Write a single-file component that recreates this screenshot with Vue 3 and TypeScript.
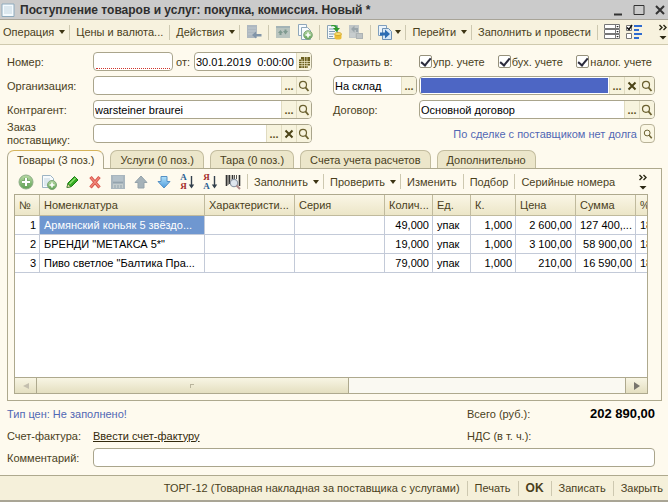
<script setup lang="ts">
import { ref } from 'vue'

interface Row {
  no: number
  name: string
  qty: string
  unit: string
  k: string
  price: string
  sum: string
  vat: string
}

const rows: Row[] = [
  { no: 1, name: 'Армянский коньяк 5 звёздо...', qty: '49,000', unit: 'упак', k: '1,000', price: '2 600,00', sum: '127 400,...', vat: '18%' },
  { no: 2, name: 'БРЕНДИ "МЕТАКСА 5*"', qty: '19,000', unit: 'упак', k: '1,000', price: '3 100,00', sum: '58 900,00', vat: '18%' },
  { no: 3, name: 'Пиво светлое "Балтика Пра...', qty: '79,000', unit: 'упак', k: '1,000', price: '210,00', sum: '16 590,00', vat: '18%' },
]

const tabs = ['Товары (3 поз.)', 'Услуги (0 поз.)', 'Тара (0 поз.)', 'Счета учета расчетов', 'Дополнительно']
const activeTab = ref(0)
const selectedRow = ref(0)

const flags = ref([
  { label: 'упр. учете', on: true },
  { label: 'бух. учете', on: true },
  { label: 'налог. учете', on: true },
])

const rowTools = [
  { id: 'add', label: 'Добавить' },
  { id: 'copy', label: 'Скопировать' },
  { id: 'edit', label: 'Изменить строку' },
  { id: 'delete', label: 'Удалить' },
  { id: 'save', label: 'Сохранить' },
  { id: 'up', label: 'Вверх' },
  { id: 'down', label: 'Вниз' },
  { id: 'sort-asc', label: 'По возрастанию' },
  { id: 'sort-desc', label: 'По убыванию' },
  { id: 'barcode', label: 'Штрихкод' },
]

const number = ref('')
const date = ref('30.01.2019  0:00:00')
const org = ref('')
const partner = ref('warsteiner braurei')
const order = ref('')
const target = ref('На склад')
const store = ref('')
const contract = ref('Основной договор')
const comment = ref('')
</script>

<template>
  <svg class="sprite" aria-hidden="true">
    <defs>
      <linearGradient id="g-green" x1="0" y1="0" x2="0" y2="1">
        <stop offset="0" stop-color="#b9dba6" /><stop offset="1" stop-color="#5da052" />
      </linearGradient>
      <linearGradient id="g-blue" x1="0" y1="0" x2="0" y2="1">
        <stop offset="0" stop-color="#b4e2fa" /><stop offset="1" stop-color="#4c9bdc" />
      </linearGradient>
    </defs>
    <symbol id="i-doc" viewBox="0 0 16 16">
      <path d="M2 2h12v12.500H2z" fill="#f4fafd" stroke="#8eaabd" />
      <path d="M4 5h8M4 7h8M4 9h8M4 11h8" stroke="#c3d5e0" />
    </symbol>
    <symbol id="i-add" viewBox="0 0 16 16">
      <circle cx="8" cy="8" r="7" fill="url(#g-green)" stroke="#8fae88" />
      <path d="M8 4v8M4 8h8" stroke="#78a86c" stroke-width="4" />
      <path d="M8 4v8M4 8h8" stroke="#fff" stroke-width="2" />
    </symbol>
    <symbol id="i-copy" viewBox="0 0 16 16">
      <path d="M1.500 1.500h8l3 3v9h-11z" fill="#f7fbfd" stroke="#9db4c4" />
      <path d="M3 5h6M3 7h7M3 9h5M3 11h4" stroke="#c3d5e0" />
      <circle cx="11" cy="11" r="4.500" fill="url(#g-green)" stroke="#7da577" />
      <path d="M11 8.500v5M8.500 11h5" stroke="#fff" stroke-width="1.600" />
    </symbol>
    <symbol id="i-copies" viewBox="0 0 16 16">
      <path d="M1.500 .5h8v11h-8z" fill="#f7fbfd" stroke="#8fa7ba" />
      <path d="M4.500 3.500h6l3 3v9h-9z" fill="#f7fbfd" stroke="#8fa7ba" />
      <circle cx="11" cy="11" r="4.300" fill="url(#g-green)" stroke="#7da577" />
      <path d="M11 8.500v5M8.500 11h5" stroke="#fff" stroke-width="1.600" />
    </symbol>
    <symbol id="i-edit" viewBox="0 0 16 16">
      <path d="M3 13.500l1-4.500 6.500-6.500 3.500 3.500-6.500 6.500z" fill="#35ab22" stroke="#1c7c14" />
      <path d="M5.500 10l6-6" stroke="#8be070" stroke-width="1.500" />
      <path d="M3 13.500l.8-3.500 2.800 2.700z" fill="#f2e6b4" stroke="#386b2a" stroke-width=".6" />
    </symbol>
    <symbol id="i-delete" viewBox="0 0 16 16">
      <path d="M3.500 3l9 10.500M12.500 3l-9 10.500" stroke="#d85348" stroke-width="3.200" />
      <path d="M3.800 3.500l8.500 9.500M12.200 3.500l-8.500 9.500" stroke="#f0887a" stroke-width="1.200" />
    </symbol>
    <symbol id="i-save" viewBox="0 0 16 16">
      <path d="M1 1h14v14H1z" fill="#a9b6be" />
      <path d="M3 2h10v5H3z" fill="#b4c1c9" /><path d="M3 10h10v4H3z" fill="#c3cccd" />
      <path d="M3 8.500h10M5 11v3M8 11v3M11 11v3" stroke="#93a3ad" />
    </symbol>
    <symbol id="i-up" viewBox="0 0 16 16">
      <path d="M8 2l6 6.500h-3V14H5V8.500H2z" fill="#a5b2b9" stroke="#95a3ab" />
    </symbol>
    <symbol id="i-down" viewBox="0 0 16 16">
      <path d="M8 14L2 7.500h3V2.500h6v5h3z" fill="url(#g-blue)" stroke="#5590c4" />
    </symbol>
    <symbol id="i-arrow-down" viewBox="0 0 16 16">
      <path d="M12.500 2v11" stroke="#33404c" stroke-width="1.400" />
      <path d="M9.800 10.500h5.400L12.500 14.500z" fill="#33404c" />
    </symbol>
    <symbol id="i-barcode" viewBox="0 0 16 16">
      <path d="M1.500 1v11M4.500 1v9M7.500 1v5M14.500 1v11" stroke="#333" stroke-width="1.600" />
      <path d="M3 1v10M9.500 1v4M11.500 1v4" stroke="#555" />
      <circle cx="9" cy="9" r="3.700" fill="#dfe6ee" stroke="#909aa8" stroke-width="1.200" />
      <path d="M11.500 11.500l3.500 3.500" stroke="#b08a8a" stroke-width="2" />
    </symbol>
    <symbol id="i-back" viewBox="0 0 16 16">
      <path d="M1 1h10v13H1z" fill="#aeb8c0" /><path d="M2 4h8M2 7h8M2 10h8" stroke="#bfc8ce" />
      <path d="M6 11l4-3.500V10h5.500v2.500H10V14.500z" fill="#8295a8" />
    </symbol>
    <symbol id="i-refresh" viewBox="0 0 16 16">
      <path d="M1 2h14v12H1z" fill="#b9c4bf" /><path d="M1 3h14" stroke="#a3b3b6" stroke-width="2" />
      <path d="M3 9l2.500-3L8 9H6.500v2H4.500V9zM8 7h1.500V5.500h2V7H13l-2.500 3.500z" fill="#7f9a90" />
    </symbol>
    <symbol id="i-post" viewBox="0 0 16 16">
      <path d="M1.500 1.500h10v13h-10z" fill="#f4f9fc" stroke="#8ba4b6" />
      <path d="M3 5h5M3 7.500h6M3 10h5M3 12.500h4" stroke="#7d99b3" />
      <path d="M5 1.500c4-1 6 0 6.500 2.500H14l-3.500 4L7 4h2.300C9 2.500 7.500 2 5 2.500z" fill="#2f9a2c" />
      <path d="M8.500 10v4c0 2 7 2 7 0v-4z" fill="#ebbd36" />
      <ellipse cx="12" cy="10" rx="3.500" ry="1.600" fill="#f7dc6c" stroke="#c99a20" stroke-width=".7" />
    </symbol>
    <symbol id="i-unpost" viewBox="0 0 16 16">
      <path d="M1 1h10v13H1z" fill="#c0c6c7" /><path d="M8 9h7v6H8z" fill="#adb3b4" />
      <path d="M3 5l3.500-3.500V4H10v4H8V6H6.500v2.500z" fill="#9aa5aa" /><path d="M2 10h5M2 12h5M9 11h5M9 13h5" stroke="#cfd4d5" />
    </symbol>
    <symbol id="i-goto" viewBox="0 0 16 16">
      <path d="M1.500 1.500h8v10h-8z" fill="#eaf3fa" stroke="#7f9fbd" />
      <path d="M5.500 4.500h6l3 3v8h-9z" fill="#d6e8f6" stroke="#6d90b3" />
      <path d="M3 8.500h5V5.500l5 4.500-5 4.500v-3H3z" fill="#2c6db3" />
    </symbol>
    <symbol id="i-list" viewBox="0 0 16 16">
      <path d="M.5 .5h15v4H.5zM.5 5.500h15v4H.5zM.5 10.500h15v4H.5z" fill="#fff" stroke="#777" />
      <path d="M11.500 .5v14" stroke="#777" />
      <path d="M12.300 2h2.500l-1.200 1.500zM12.300 7h2.500l-1.200 1.500zM12.300 12h2.500l-1.200 1.500z" fill="#222" />
    </symbol>
    <symbol id="i-checks" viewBox="0 0 16 16">
      <path d="M.5 1.500h5v5h-5zM.5 9.500h5v5h-5z" fill="#fff" stroke="#777" />
      <path d="M1 3.500l2 2L6 1" fill="none" stroke="#111" stroke-width="1.500" />
      <path d="M8 2h8M8 10h8" stroke="#2e6bd0" stroke-width="2" />
      <path d="M8 6h5M8 14h5" stroke="#2e6bd0" stroke-width="2" />
    </symbol>
    <symbol id="i-lens" viewBox="0 0 12 12">
      <circle cx="5" cy="4.800" r="3.500" fill="none" stroke="#6b6130" stroke-width="1.200" />
      <path d="M7.400 7.400L10.500 11" stroke="#6b6130" stroke-width="1.800" />
    </symbol>
    <symbol id="i-cross" viewBox="0 0 12 12">
      <path d="M2.500 2.500l7 7M9.500 2.500l-7 7" stroke="#4c4418" stroke-width="2" />
    </symbol>
    <symbol id="i-cal" viewBox="0 0 12 12">
      <path d="M3 1h9v8.500h-2V12H1V3.500h2z" fill="#6b5f1e" />
      <path d="M1 5.500h11M1 7.500h11M1 9.700h9M4 3v9M6.500 1v11M9 1v11" stroke="#f3eecb" stroke-width=".7" />
    </symbol>
    <symbol id="i-more" viewBox="0 0 10 16">
      <path d="M1.500 1l2.500 2.500L1.500 6M5.500 1L8 3.500 5.500 6" fill="none" stroke="#2b2714" stroke-width="1.400" />
      <path d="M1.500 12h7L5 15.500z" fill="#2b2714" />
    </symbol>
  </svg>

  <main class="window">
    <header class="titlebar">
      <svg class="ic"><use href="#i-doc" /></svg>
      <h1>Поступление товаров и услуг: покупка, комиссия. Новый *</h1>
      <div class="win-buttons">
        <button type="button" aria-label="Свернуть"><svg viewBox="0 0 12 12"><path d="M2 10.500h8" stroke="#333" stroke-width="2" /></svg></button>
        <button type="button" aria-label="Развернуть"><svg viewBox="0 0 12 12"><path d="M1 1.500h10v9H1z" fill="none" stroke="#333" /></svg></button>
        <button type="button" aria-label="Закрыть окно"><svg viewBox="0 0 12 12"><path d="M2 2l8 8M10 2l-8 8" stroke="#333" stroke-width="2" /></svg></button>
      </div>
    </header>

    <nav class="toolbar">
      <button type="button" class="tb">Операция<i class="caret" /></button>
      <i class="sep" />
      <button type="button" class="tb">Цены и валюта...</button>
      <i class="sep" />
      <button type="button" class="tb">Действия<i class="caret" /></button>
      <i class="sep" />
      <button type="button" class="tool" aria-label="К списку"><svg class="ic"><use href="#i-back" /></svg></button>
      <i class="sep" />
      <button type="button" class="tool" aria-label="Перечитать"><svg class="ic"><use href="#i-refresh" /></svg></button>
      <button type="button" class="tool" aria-label="Скопировать документ"><svg class="ic"><use href="#i-copies" /></svg></button>
      <i class="sep" />
      <button type="button" class="tool" aria-label="Провести"><svg class="ic"><use href="#i-post" /></svg></button>
      <button type="button" class="tool" aria-label="Отменить проведение"><svg class="ic"><use href="#i-unpost" /></svg></button>
      <i class="sep" />
      <button type="button" class="tool" aria-label="На основании"><svg class="ic"><use href="#i-goto" /></svg><i class="caret tight" /></button>
      <i class="sep" />
      <button type="button" class="tb">Перейти<i class="caret" /></button>
      <i class="sep" />
      <button type="button" class="tb">Заполнить и провести</button>
      <i class="sep" />
      <button type="button" class="tool" aria-label="Список"><svg class="ic"><use href="#i-list" /></svg></button>
      <button type="button" class="tool" aria-label="Настройка"><svg class="ic"><use href="#i-checks" /></svg></button>
      <button type="button" class="more" aria-label="Ещё"><svg><use href="#i-more" /></svg></button>
    </nav>

    <form class="form" @submit.prevent>
      <div class="col">
        <div class="line">
          <label class="lbl" for="f-num">Номер:</label>
          <div class="field num"><input id="f-num" v-model="number" class="required" /></div>
          <label class="from" for="f-date">от:</label>
          <div class="field"><input id="f-date" v-model="date" class="date" /><button type="button" aria-label="Календарь"><svg><use href="#i-cal" /></svg></button></div>
        </div>
        <div class="line">
          <label class="lbl" for="f-org">Организация:</label>
          <div class="field"><input id="f-org" v-model="org" /><button type="button" class="dots">...</button><button type="button" aria-label="Открыть"><svg><use href="#i-lens" /></svg></button></div>
        </div>
        <div class="line">
          <label class="lbl" for="f-partner">Контрагент:</label>
          <div class="field"><input id="f-partner" v-model="partner" /><button type="button" class="dots">...</button><button type="button" aria-label="Открыть"><svg><use href="#i-lens" /></svg></button></div>
        </div>
        <div class="line">
          <label class="lbl two" for="f-order">Заказ<br>поставщику:</label>
          <div class="field"><input id="f-order" v-model="order" /><button type="button" class="dots">...</button><button type="button" aria-label="Очистить"><svg><use href="#i-cross" /></svg></button><button type="button" aria-label="Открыть"><svg><use href="#i-lens" /></svg></button></div>
        </div>
      </div>

      <div class="col">
        <div class="line">
          <span class="lbl">Отразить в:</span>
          <div class="flags">
            <label v-for="f in flags" :key="f.label"><input v-model="f.on" type="checkbox">{{ f.label }}</label>
          </div>
        </div>
        <div class="line">
          <div class="field target"><input v-model="target" aria-label="Поступление"><button type="button" class="dots">...</button></div>
          <div class="field"><input v-model="store" class="active" aria-label="Склад"><button type="button" class="dots">...</button><button type="button" aria-label="Очистить"><svg><use href="#i-cross" /></svg></button><button type="button" aria-label="Открыть"><svg><use href="#i-lens" /></svg></button></div>
        </div>
        <div class="line">
          <label class="lbl" for="f-contract">Договор:</label>
          <div class="field"><input id="f-contract" v-model="contract"><button type="button" class="dots">...</button><button type="button" aria-label="Открыть"><svg><use href="#i-lens" /></svg></button></div>
        </div>
        <div class="line debt">
          <span class="note">По сделке с поставщиком нет долга</span>
          <button type="button" class="lens-btn" aria-label="Показать долг"><svg><use href="#i-lens" /></svg></button>
        </div>
      </div>
    </form>

    <section class="tabs">
      <div class="tablist" role="tablist">
        <button v-for="(t, i) in tabs" :key="t" type="button" role="tab" :aria-selected="i === activeTab" :class="{ on: i === activeTab }" @click="activeTab = i">{{ t }}</button>
      </div>
      <div class="panel">
        <div class="toolbar inner">
          <button v-for="t in rowTools" :key="t.id" type="button" class="tool" :aria-label="t.label">
            <span v-if="t.id.startsWith('sort')" class="sort" :class="{ desc: t.id === 'sort-desc' }">
              <span class="letters"><b class="a">А</b><b class="z">Я</b></span>
              <svg class="ic"><use href="#i-arrow-down" /></svg>
            </span>
            <svg v-else class="ic"><use :href="'#i-' + t.id" /></svg>
          </button>
          <i class="sep" />
          <button type="button" class="tb">Заполнить<i class="caret" /></button>
          <i class="sep" />
          <button type="button" class="tb">Проверить<i class="caret" /></button>
          <i class="sep" />
          <button type="button" class="tb">Изменить</button>
          <i class="sep" />
          <button type="button" class="tb">Подбор</button>
          <i class="sep" />
          <button type="button" class="tb">Серийные номера</button>
          <button type="button" class="more" aria-label="Ещё"><svg><use href="#i-more" /></svg></button>
        </div>

        <div class="grid">
          <div class="scroll">
            <table>
              <colgroup>
                <col class="c-no"><col class="c-name"><col class="c-wide"><col class="c-wide"><col class="c-qty"><col class="c-unit"><col class="c-k"><col class="c-sum"><col class="c-sum"><col class="c-vat">
              </colgroup>
              <thead>
                <tr><th>№</th><th>Номенклатура</th><th>Характеристи...</th><th>Серия</th><th>Колич...</th><th>Ед.</th><th>К.</th><th>Цена</th><th>Сумма</th><th>%</th></tr>
              </thead>
              <tbody>
                <tr v-for="(r, i) in rows" :key="r.no" @click="selectedRow = i">
                  <td class="r">{{ r.no }}</td>
                  <td :class="{ sel: i === selectedRow }">{{ r.name }}</td>
                  <td /><td />
                  <td class="r">{{ r.qty }}</td>
                  <td>{{ r.unit }}</td>
                  <td class="r">{{ r.k }}</td>
                  <td class="r">{{ r.price }}</td>
                  <td class="r">{{ r.sum }}</td>
                  <td>{{ r.vat }}</td>
                </tr>
              </tbody>
            </table>
          </div>
          <div class="hbar">
            <button type="button" aria-label="Влево"><svg viewBox="0 0 8 8"><path d="M7 1v6L1 4z" fill="#c4bfae" /></svg></button>
            <div class="track"><div class="thumb"><i /></div></div>
            <button type="button" aria-label="Вправо"><svg viewBox="0 0 8 8"><path d="M1 0v8l6-4z" fill="#77746c" /></svg></button>
          </div>
        </div>
      </div>
    </section>

    <section class="summary">
      <div class="sum-line">
        <span class="note">Тип цен: Не заполнено!</span>
        <span class="total"><span>Всего (руб.):</span><strong>202 890,00</strong></span>
      </div>
      <div class="sum-line">
        <span class="lbl">Счет-фактура:</span>
        <a href="#">Ввести счет-фактуру</a>
        <span class="total"><span>НДС (в т. ч.):</span></span>
      </div>
      <div class="sum-line">
        <label class="lbl" for="f-comment">Комментарий:</label>
        <div class="field"><input id="f-comment" v-model="comment"></div>
      </div>
    </section>

    <footer class="footer">
      <button type="button" class="tb">ТОРГ-12 (Товарная накладная за поставщика с услугами)</button>
      <i class="sep" />
      <button type="button" class="tb">Печать</button>
      <i class="sep" />
      <button type="button" class="tb ok">OK</button>
      <i class="sep" />
      <button type="button" class="tb">Записать</button>
      <i class="sep" />
      <button type="button" class="tb">Закрыть</button>
    </footer>
  </main>
</template>

<style>
body {
  background: #fefaee;
}
</style>

<style scoped>
* {
  box-sizing: border-box;
}
.sprite {
  position: absolute;
  width: 0;
  height: 0;
}
.window {
  display: flex;
  flex-direction: column;
  min-height: 100vh;
  background: #fefaee;
  border-bottom: 2px solid #a9a595;
  color: #4a3f1c;
  font: 11px/14px "Liberation Sans", Arial, sans-serif;
}
button,
input {
  margin: 0;
  padding: 0;
  border: 0;
  background: none;
  color: inherit;
  font: inherit;
}
svg {
  display: block;
  flex: none;
}
.ic {
  width: 16px;
  height: 16px;
}
.titlebar {
  display: flex;
  align-items: center;
  gap: 4px;
  height: 20px;
  background: #cbcbcb;
  border-bottom: 1px solid #a8a498;
}
h1 {
  flex: 1;
  margin: 0;
  color: #2e2e2e;
  font: bold 12px/16px "Liberation Sans", Arial, sans-serif;
  white-space: nowrap;
}
.win-buttons {
  display: flex;
  gap: 9px;
  padding-right: 2px;
}
.win-buttons svg {
  width: 12px;
  height: 12px;
}
.toolbar {
  display: flex;
  align-items: center;
  height: 25px;
  padding-left: 3px;
  background: #f7f2de;
  border-bottom: 1px solid #cfc9ae;
  white-space: nowrap;
}
.tb {
  display: flex;
  align-items: center;
}
.caret {
  margin: 0 -2px 0 5px;
  border: 3px solid transparent;
  border-top: 4px solid #3c3413;
  border-bottom: 0;
}
.caret.tight {
  margin-left: 2px;
}
.sep {
  flex: none;
  width: 1px;
  height: 15px;
  margin: 0 7px;
  background: #cdc8b0;
}
.toolbar .sep {
  margin: 0 6px;
}
.tool {
  display: flex;
  align-items: center;
}
.toolbar .tool + .tool {
  margin-left: 6px;
}
.toolbar .more {
  margin-left: auto;
}
.more svg {
  width: 10px;
  height: 16px;
}
.form {
  display: grid;
  grid-template-columns: 305fr 322fr;
  gap: 21px;
  padding: 7px 13px 7px 7px;
}
.col {
  display: flex;
  flex-direction: column;
  gap: 5px;
  min-width: 0;
}
.line {
  display: flex;
  align-items: center;
  height: 19px;
}
.lbl {
  flex: none;
  width: 86px;
  white-space: nowrap;
}
.two {
  line-height: 13px;
}
.from {
  padding: 0 4px 0 3px;
}
.field {
  display: flex;
  flex: 1;
  min-width: 0;
  height: 19px;
  overflow: hidden;
  background: #fff;
  border: 1px solid #aaa58c;
  border-radius: 4px;
}
.field.num {
  flex: 0 0 80px;
}
.field.target {
  flex: 0 0 84px;
  margin-right: 2px;
}
.field input {
  flex: 1;
  width: 0;
  min-width: 0;
  padding: 0 1px;
  outline: 0;
  color: #000;
  white-space: pre;
}
.field input.required {
  margin: 0 2px 1px;
  border-bottom: 1px dotted #d0342c;
}
.field input.active {
  margin: 1px;
  background: #4d66c4;
}
.field button {
  display: flex;
  flex: none;
  align-items: center;
  justify-content: center;
  width: 15px;
  background: #f7f3dd;
  border-left: 1px solid #e0dbc0;
}
.field svg {
  width: 12px;
  height: 12px;
}
.field .dots {
  color: #5c5220;
  font-weight: bold;
}
.flags {
  display: grid;
  flex: 1;
  grid-template-columns: repeat(3, 1fr);
  white-space: nowrap;
}
.flags label {
  display: flex;
  align-items: center;
  gap: 1px;
}
.flags input {
  flex: none;
  appearance: none;
  width: 13px;
  height: 13px;
  background: #fff;
  border: 1px solid #96917c;
  border-radius: 2px;
}
.flags input:checked::after {
  content: "";
  display: block;
  width: 4px;
  height: 8px;
  margin: 0 0 0 3px;
  border: solid #2b2b3c;
  border-width: 0 2px 2px 0;
  transform: rotate(40deg);
}
.note {
  color: #5167b4;
}
.debt {
  justify-content: flex-end;
  gap: 3px;
}
.lens-btn {
  display: flex;
  align-items: center;
  justify-content: center;
  width: 15px;
  height: 19px;
  border: 1px solid #b8b298;
  border-radius: 4px;
  background: #fbf7e4;
}
.lens-btn svg {
  width: 10px;
  height: 10px;
}
.tabs {
  display: flex;
  flex: 1;
  flex-direction: column;
  padding: 0 6px 0 7px;
}
.tablist {
  display: flex;
  gap: 6px;
}
.tablist button {
  height: 18px;
  padding: 0 9px;
  background: #ece6ca;
  border: 1px solid #c2bc9e;
  border-bottom: 0;
  border-radius: 7px 7px 0 0;
  white-space: nowrap;
}
.tablist .on {
  height: 19px;
  margin-bottom: -1px;
  background: #fefaee;
  border-color: #aea98e;
  border-top-color: #d5b45c;
  z-index: 1;
}
.panel {
  display: flex;
  flex: 1;
  flex-direction: column;
  padding: 0 13px 6px 6px;
  border: 1px solid #aea98e;
}
.inner {
  height: 25px;
  padding-left: 4px;
  background: none;
  border: 0;
}
.inner .tool + .tool {
  margin-left: 7px;
}
.sort {
  display: flex;
  align-items: center;
  width: 16px;
}
.sort .ic {
  margin-left: -9px;
}
.letters {
  display: flex;
  flex-direction: column;
  width: 9px;
  font: bold 9px/9px "Liberation Serif", serif;
}
.desc .letters {
  flex-direction: column-reverse;
}
.a {
  color: #2b5f93;
}
.z {
  color: #a32a2a;
}
.grid {
  display: flex;
  flex: 1;
  flex-direction: column;
  background: #fff;
  border: 1px solid #aea98e;
}
.scroll {
  flex: 1;
  width: 0;
  min-width: 100%;
  overflow: hidden;
}
table {
  width: 669px;
  table-layout: fixed;
  border-collapse: separate;
  border-spacing: 0;
}
.c-no { width: 25px; }
.c-name { width: 165px; }
.c-wide { width: 90px; }
.c-qty { width: 48px; }
.c-unit { width: 38px; }
.c-k { width: 45px; }
.c-sum { width: 60px; }
.c-vat { width: 48px; }
th,
td {
  height: 19px;
  padding: 0 3px 0 4px;
  overflow: hidden;
  border-right: 1px solid #c3cad8;
  border-bottom: 1px solid #c3cad8;
  color: #000;
  text-align: left;
  white-space: nowrap;
}
th {
  height: 21px;
  padding-right: 0;
  background: linear-gradient(#faf6e6, #ece6c8);
  border-right-color: #c0ba9d;
  border-bottom-color: #c0ba9d;
  color: #4a3f1c;
  font-weight: normal;
}
.r {
  text-align: right;
}
.sel {
  background: #6f97d0;
  color: #fff;
}
.hbar {
  display: flex;
  height: 16px;
  border-top: 1px solid #aea98e;
}
.hbar button {
  display: flex;
  align-items: center;
  justify-content: center;
  width: 21px;
  background: linear-gradient(#f8f5e4, #e4dfc0);
}
.hbar svg {
  width: 8px;
  height: 8px;
}
.track {
  flex: 1;
  background: #faf9f2;
  border: solid #aea98e;
  border-width: 0 1px;
}
.thumb {
  display: flex;
  align-items: center;
  justify-content: center;
  width: 53%;
  height: 100%;
  background: linear-gradient(#f8f5e4, #e4dfc0);
  border-right: 1px solid #aea98e;
}
.thumb i {
  width: 4px;
  height: 4px;
  border: solid #b9b49c;
  border-width: 1px 0 0 1px;
}
.summary {
  display: flex;
  flex-direction: column;
  gap: 3px;
  padding: 3px 13px 8px 7px;
}
.sum-line {
  display: flex;
  align-items: center;
  height: 19px;
}
.total {
  display: flex;
  justify-content: space-between;
  width: 188px;
  margin-left: auto;
}
.total strong {
  color: #000;
  font-size: 13px;
}
a {
  color: #33290c;
}
.footer {
  display: flex;
  align-items: center;
  justify-content: flex-end;
  height: 25px;
  padding-right: 5px;
  background: #f5f0da;
  border-top: 1px solid #aea98e;
  white-space: nowrap;
}
.ok {
  font-size: 12px;
  font-weight: bold;
}
</style>
